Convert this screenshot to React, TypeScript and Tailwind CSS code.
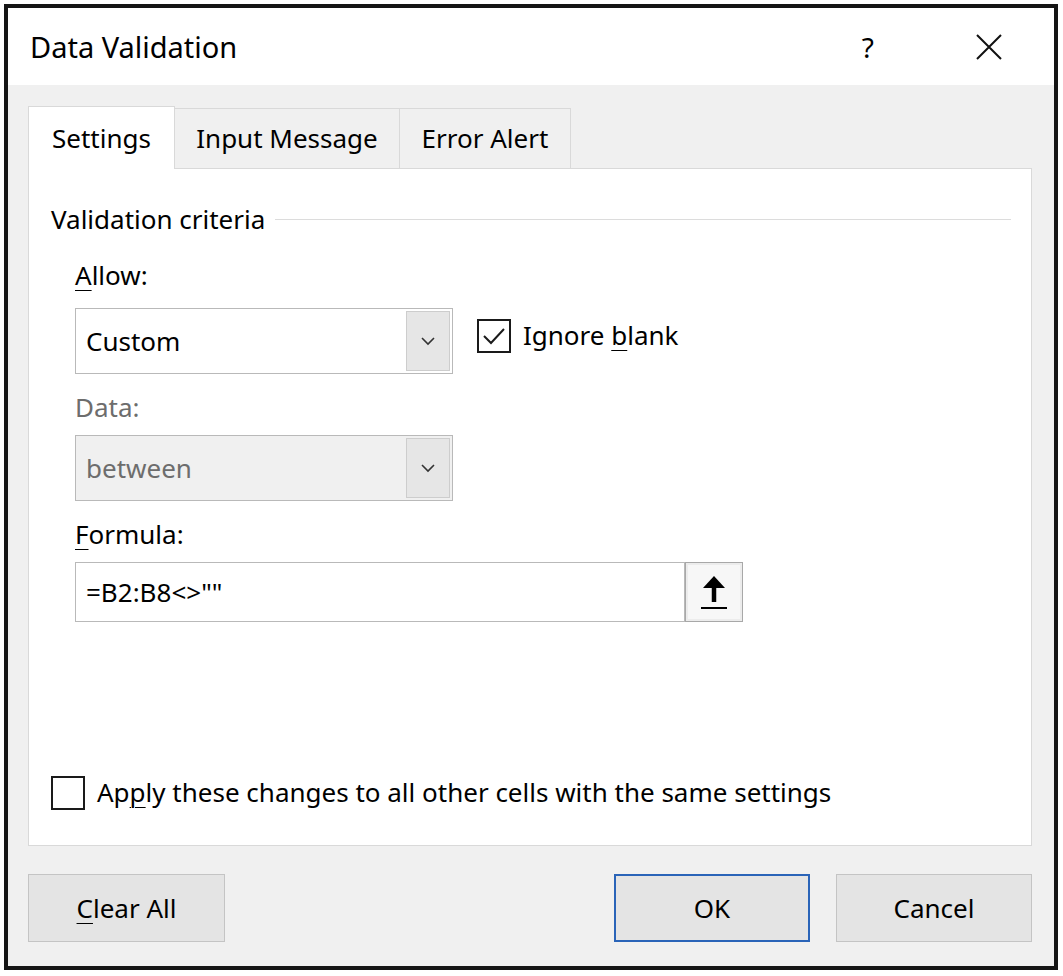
import React from 'react';

const font = { fontFamily: '"Noto Sans", "Open Sans", sans-serif' };

const Chevron: React.FC = () => (
    <svg width="16" height="10" viewBox="0 0 16 10" fill="none">
        <path d="M2 2 L8 8 L14 2" stroke="#333" strokeWidth="1.6" />
    </svg>
);

const Select: React.FC<{ value: string; disabled?: boolean }> = ({ value, disabled }) => (
    <div
        className={`flex h-[66px] w-[378px] items-stretch border border-[#b9b9b9] ${disabled ? 'bg-[#f0f0f0]' : 'bg-white'}`}
    >
        <span className={`flex flex-1 items-center pl-[10px] text-[26px] ${disabled ? 'text-[#6d6d6d]' : 'text-black'}`}>
            {value}
        </span>
        <span className="my-[2px] mr-[2px] flex w-[44px] items-center justify-center border border-[#cdcdcd] bg-[#e6e6e6]">
            <Chevron />
        </span>
    </div>
);

const Box: React.FC<{ checked?: boolean }> = ({ checked }) => (
    <span className="flex h-[34px] w-[34px] items-center justify-center border-[2px] border-[#1a1a1a] bg-white">
        {checked && (
            <svg width="26" height="20" viewBox="0 0 26 20" fill="none">
                <path d="M3 10 L10 17 L23 3" stroke="#1a1a1a" strokeWidth="2" />
            </svg>
        )}
    </span>
);

export default function App() {
    return (
        <div className="h-[976px] w-[1063px] bg-white pl-[4px] pt-[4px]" style={font}>
            <div className="flex h-[966px] w-[1054px] flex-col border-[4px] border-[#151515]">
                {/* title bar */}
                <div className="flex h-[77px] items-center bg-white pl-[22px] text-black">
                    <span className="text-[29px]">Data Validation</span>
                    <span className="ml-auto mr-[102px] text-[28px]">?</span>
                    <svg className="mr-[52px]" width="26" height="26" viewBox="0 0 26 26" fill="none">
                        <path d="M1 1 L25 25 M25 1 L1 25" stroke="#111" strokeWidth="2" />
                    </svg>
                </div>

                <div className="flex flex-1 flex-col bg-[#f0f0f0] pl-[20px] pr-[22px] pt-[21px] pb-[24px]">
                    {/* tabs */}
                    <div className="flex items-end text-[26px] text-black">
                        <div className="relative z-10 -mb-px flex h-[63px] w-[147px] items-center justify-center border border-b-0 border-[#d9d9d9] bg-white">
                            Settings
                        </div>
                        <div className="flex h-[60px] w-[225px] items-center justify-center border-t border-r border-[#d9d9d9]">
                            Input Message
                        </div>
                        <div className="flex h-[60px] w-[171px] items-center justify-center border-t border-r border-[#d9d9d9]">
                            Error Alert
                        </div>
                    </div>

                    {/* panel */}
                    <div className="flex h-[678px] flex-col border border-[#d9d9d9] bg-white text-[26px] text-black">
                        <div className="mt-[32px] ml-[22px] mr-[20px] flex items-center">
                            <span className="leading-[36px]">Validation criteria</span>
                            <span className="ml-[10px] h-px flex-1 bg-[#dcdcdc]" />
                        </div>

                        <div className="ml-[46px] mt-[20px] flex flex-col">
                            <span className="leading-[36px]">
                                <span className="underline underline-offset-[5px] decoration-1">A</span>llow:
                            </span>
                            <div className="mt-[15px] flex items-start">
                                <Select value="Custom" />
                                <label className="ml-[24px] mt-[8px] flex items-center gap-[12px]">
                                    <Box checked />
                                    <span>
                                        Ignore <span className="underline underline-offset-[5px] decoration-1">b</span>lank
                                    </span>
                                </label>
                            </div>

                            <span className="mt-[15px] leading-[36px] text-[#6d6d6d]">Data:</span>
                            <div className="mt-[10px]">
                                <Select value="between" disabled />
                            </div>

                            <span className="mt-[15px] leading-[36px]">
                                <span className="underline underline-offset-[5px] decoration-1">F</span>ormula:
                            </span>
                            <div className="mt-[10px] flex">
                                <div className="flex h-[60px] w-[610px] items-center border border-[#b9b9b9] pl-[10px]">
                                    =B2:B8&lt;&gt;""
                                </div>
                                <button className="flex h-[60px] w-[58px] items-center justify-center border border-[#a8a8a8] bg-[#ececec]">
                                    <span className="flex h-[54px] w-[52px] items-center justify-center bg-[#f7f7f7]">
                                        <svg width="28" height="40" viewBox="0 0 28 40" fill="none">
                                            <path d="M14 30 V8" stroke="#000" strokeWidth="4.5" />
                                            <path d="M3 16 L14 4 L25 16 Z" fill="#000" />
                                            <path d="M1 36 H27" stroke="#000" strokeWidth="2" />
                                        </svg>
                                    </span>
                                </button>
                            </div>
                        </div>

                        <label className="mt-auto mb-[33px] ml-[22px] flex items-center gap-[12px]">
                            <Box />
                            <span>
                                Ap<span className="underline underline-offset-[5px] decoration-1">p</span>ly these changes to all other cells with the same settings
                            </span>
                        </label>
                    </div>

                    {/* buttons */}
                    <div className="mt-auto flex text-[26px] text-black">
                        <button className="flex h-[68px] w-[197px] items-center justify-center border border-[#c4c4c4] bg-[#e4e4e4]">
                            <span>
                                <span className="underline underline-offset-[5px] decoration-1">C</span>lear All
                            </span>
                        </button>
                        <button className="ml-auto flex h-[68px] w-[196px] items-center justify-center border-[2px] border-[#2a64b8] bg-[#e4e4e4]">
                            OK
                        </button>
                        <button className="ml-[26px] flex h-[68px] w-[196px] items-center justify-center border border-[#c4c4c4] bg-[#e4e4e4]">
                            Cancel
                        </button>
                    </div>
                </div>
            </div>
        </div>
    );
}
